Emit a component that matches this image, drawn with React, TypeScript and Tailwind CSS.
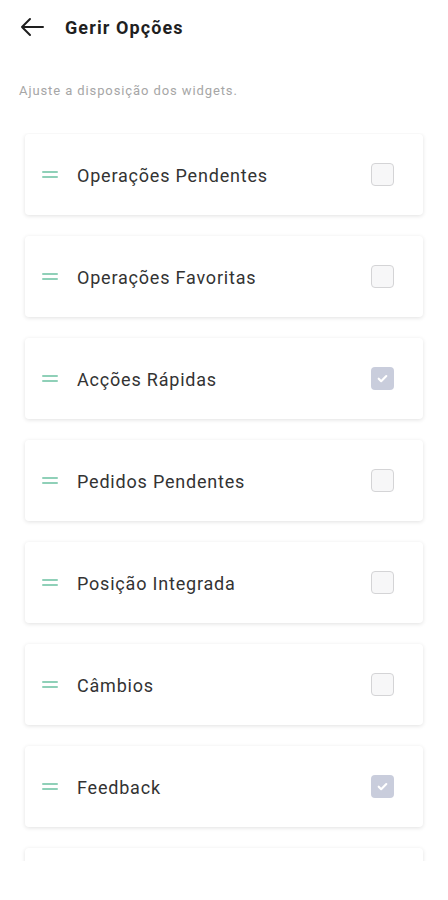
import React from "react";

const items = [
  { label: "Operações Pendentes", checked: false },
  { label: "Operações Favoritas", checked: false },
  { label: "Acções Rápidas", checked: true },
  { label: "Pedidos Pendentes", checked: false },
  { label: "Posição Integrada", checked: false },
  { label: "Câmbios", checked: false },
  { label: "Feedback", checked: true },
];

function Handle() {
  return (
    <div className="flex flex-col gap-[3px] w-[16px]">
      <div className="h-[2px] w-full bg-[#8fd0b8] rounded" />
      <div className="h-[2px] w-full bg-[#8fd0b8] rounded" />
    </div>
  );
}

function Check({ checked }: { checked: boolean }) {
  if (checked) {
    return (
      <div className="w-[23px] h-[23px] rounded-[4px] bg-[#c9cddc] flex items-center justify-center">
        <svg width="13" height="13" viewBox="0 0 24 24" fill="none" stroke="white" strokeWidth="4" strokeLinecap="round" strokeLinejoin="round">
          <path d="M5 12.5l4.5 4.5L19 7.5" />
        </svg>
      </div>
    );
  }
  return <div className="w-[23px] h-[23px] rounded-[4px] border-[1.5px] border-[#d4d4d6] bg-[#f7f7f8]" />;
}

export default function App() {
  return (
    <div className="w-[448px] h-[900px] bg-white flex flex-col" style={{ fontFamily: "Roboto, 'Noto Sans', sans-serif" }}>
      <div className="flex items-center h-[54px] pl-[20px]">
        <svg width="25" height="20" viewBox="0 0 25 20" fill="none" stroke="#1f1f1f" strokeWidth="2" strokeLinecap="round" strokeLinejoin="round">
          <path d="M23 10H2M10 2L2 10l8 8" />
        </svg>
        <span className="ml-[20px] text-[18px] font-bold tracking-[1.1px] text-[#1f1f1f]">Gerir Opções</span>
      </div>
      <div className="pl-[19px] mt-[27px] text-[13px] tracking-[0.9px] text-[#a6a6a6]">Ajuste a disposição dos widgets.</div>
      <div className="mt-[32px] h-[728px] overflow-hidden px-[25px] pt-[1px]">
        <div className="flex flex-col gap-[21px]">
          {items.map((it) => (
            <div
              key={it.label}
              className="h-[81px] bg-white rounded-[4px] flex items-center pl-[17px] pr-[29px] shadow-[0_1px_4px_rgba(0,0,0,0.12)]"
            >
              <Handle />
              <span className="ml-[19px] mt-[2px] flex-1 text-[18px] tracking-[0.8px] text-[#333333]">{it.label}</span>
              <Check checked={it.checked} />
            </div>
          ))}
          <div className="h-[81px] bg-white rounded-[4px] shadow-[0_1px_4px_rgba(0,0,0,0.12)]" />
        </div>
      </div>
    </div>
  );
}
